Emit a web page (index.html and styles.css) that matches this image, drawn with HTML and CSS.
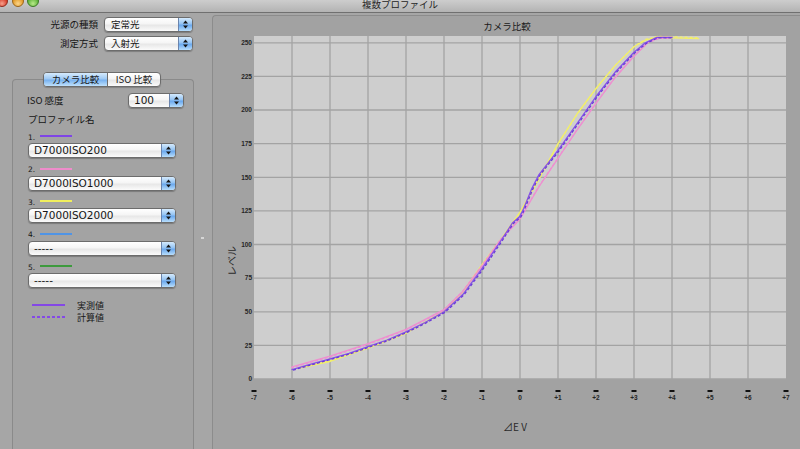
FILE: index.html
```html
<!DOCTYPE html>
<html lang="ja">
<head>
<meta charset="utf-8">
<title>複数プロファイル</title>
<link rel="stylesheet" href="styles.css">
</head>
<body>
<div class="window">
  <header class="titlebar">
    <div class="lights"><span class="light red"></span><span class="light amber"></span><span class="light green"></span></div>
    <div class="title">複数プロファイル</div>
    <div></div>
  </header>
  <div class="main">
    <aside class="sidebar">
      <div class="source-form">
        <span class="form-label">光源の種類</span>
        <div class="popup popup-top"><span class="popup-text">定常光</span><span class="stepper"><svg width="7" height="11" viewBox="0 0 7 11"><polygon points="1,4.5 3.5,1.5 6,4.5"/><polygon points="1,6.5 3.5,9.5 6,6.5"/></svg></span></div>
        <span class="form-label">測定方式</span>
        <div class="popup popup-top"><span class="popup-text">入射光</span><span class="stepper"><svg width="7" height="11" viewBox="0 0 7 11"><polygon points="1,4.5 3.5,1.5 6,4.5"/><polygon points="1,6.5 3.5,9.5 6,6.5"/></svg></span></div>
      </div>
      <section class="group">
        <div class="segmented"><span class="seg seg-on">カメラ比較</span><span class="seg">ISO 比較</span></div>
        <div class="iso-row">
          <span class="label">ISO 感度</span>
          <div class="popup popup-iso"><span class="popup-text latin">100</span><span class="stepper"><svg width="7" height="11" viewBox="0 0 7 11"><polygon points="1,4.5 3.5,1.5 6,4.5"/><polygon points="1,6.5 3.5,9.5 6,6.5"/></svg></span></div>
        </div>
        <div class="section-label">プロファイル名</div>
        <div class="profile first">
          <div class="profile-head"><span class="num">1.</span><span class="swatch sw-purple"></span></div>
          <div class="popup popup-list"><span class="popup-text latin">D7000ISO200</span><span class="stepper"><svg width="7" height="11" viewBox="0 0 7 11"><polygon points="1,4.5 3.5,1.5 6,4.5"/><polygon points="1,6.5 3.5,9.5 6,6.5"/></svg></span></div>
        </div>
        <div class="profile">
          <div class="profile-head"><span class="num">2.</span><span class="swatch sw-pink"></span></div>
          <div class="popup popup-list"><span class="popup-text latin">D7000ISO1000</span><span class="stepper"><svg width="7" height="11" viewBox="0 0 7 11"><polygon points="1,4.5 3.5,1.5 6,4.5"/><polygon points="1,6.5 3.5,9.5 6,6.5"/></svg></span></div>
        </div>
        <div class="profile">
          <div class="profile-head"><span class="num">3.</span><span class="swatch sw-yellow"></span></div>
          <div class="popup popup-list"><span class="popup-text latin">D7000ISO2000</span><span class="stepper"><svg width="7" height="11" viewBox="0 0 7 11"><polygon points="1,4.5 3.5,1.5 6,4.5"/><polygon points="1,6.5 3.5,9.5 6,6.5"/></svg></span></div>
        </div>
        <div class="profile">
          <div class="profile-head"><span class="num">4.</span><span class="swatch sw-blue"></span></div>
          <div class="popup popup-list"><span class="popup-text latin">-----</span><span class="stepper"><svg width="7" height="11" viewBox="0 0 7 11"><polygon points="1,4.5 3.5,1.5 6,4.5"/><polygon points="1,6.5 3.5,9.5 6,6.5"/></svg></span></div>
        </div>
        <div class="profile">
          <div class="profile-head"><span class="num">5.</span><span class="swatch sw-green"></span></div>
          <div class="popup popup-list"><span class="popup-text latin">-----</span><span class="stepper"><svg width="7" height="11" viewBox="0 0 7 11"><polygon points="1,4.5 3.5,1.5 6,4.5"/><polygon points="1,6.5 3.5,9.5 6,6.5"/></svg></span></div>
        </div>
        <div class="legend">
          <div class="legend-row"><span class="legend-line solid"></span><span class="legend-text">実測値</span></div>
          <div class="legend-row"><span class="legend-line dashed"></span><span class="legend-text">計算値</span></div>
        </div>
      </section>
    </aside>
    <div class="splitter"><span class="grip"></span></div>
    <section class="chart-panel">
      <svg class="chart" width="587" height="433" viewBox="213 16 587 433">
        <text class="chart-title" x="507" y="29.5" text-anchor="middle">カメラ比較</text>
        <rect class="plot-bg" x="254" y="36" width="532" height="343"/>
        <g class="grid">
          <line x1="292" y1="36" x2="292" y2="379"/>
          <line x1="330" y1="36" x2="330" y2="379"/>
          <line x1="368" y1="36" x2="368" y2="379"/>
          <line x1="406" y1="36" x2="406" y2="379"/>
          <line x1="444" y1="36" x2="444" y2="379"/>
          <line x1="482" y1="36" x2="482" y2="379"/>
          <line x1="520" y1="36" x2="520" y2="379"/>
          <line x1="558" y1="36" x2="558" y2="379"/>
          <line x1="596" y1="36" x2="596" y2="379"/>
          <line x1="634" y1="36" x2="634" y2="379"/>
          <line x1="672" y1="36" x2="672" y2="379"/>
          <line x1="710" y1="36" x2="710" y2="379"/>
          <line x1="748" y1="36" x2="748" y2="379"/>
          <line x1="254" y1="345.4" x2="786" y2="345.4"/>
          <line x1="254" y1="311.8" x2="786" y2="311.8"/>
          <line x1="254" y1="278.1" x2="786" y2="278.1"/>
          <line x1="254" y1="244.5" x2="786" y2="244.5"/>
          <line x1="254" y1="210.9" x2="786" y2="210.9"/>
          <line x1="254" y1="177.3" x2="786" y2="177.3"/>
          <line x1="254" y1="143.7" x2="786" y2="143.7"/>
          <line x1="254" y1="110" x2="786" y2="110"/>
          <line x1="254" y1="76.4" x2="786" y2="76.4"/>
          <line x1="254" y1="42.8" x2="786" y2="42.8"/>
          <line x1="254" y1="379" x2="786" y2="379"/>
        </g>
        <g class="ylabels" text-anchor="end">
          <text x="252" y="381.3">0</text>
          <text x="252" y="347.7">25</text>
          <text x="252" y="314.1">50</text>
          <text x="252" y="280.4">75</text>
          <text x="252" y="246.8">100</text>
          <text x="252" y="213.2">125</text>
          <text x="252" y="179.6">150</text>
          <text x="252" y="146">175</text>
          <text x="252" y="112.3">200</text>
          <text x="252" y="78.7">225</text>
          <text x="252" y="45.1">250</text>
        </g>
        <g class="xticks">
          <rect x="251.5" y="390" width="5" height="2"/>
          <rect x="289.5" y="390" width="5" height="2"/>
          <rect x="327.5" y="390" width="5" height="2"/>
          <rect x="365.5" y="390" width="5" height="2"/>
          <rect x="403.5" y="390" width="5" height="2"/>
          <rect x="441.5" y="390" width="5" height="2"/>
          <rect x="479.5" y="390" width="5" height="2"/>
          <rect x="517.5" y="390" width="5" height="2"/>
          <rect x="555.5" y="390" width="5" height="2"/>
          <rect x="593.5" y="390" width="5" height="2"/>
          <rect x="631.5" y="390" width="5" height="2"/>
          <rect x="669.5" y="390" width="5" height="2"/>
          <rect x="707.5" y="390" width="5" height="2"/>
          <rect x="745.5" y="390" width="5" height="2"/>
          <rect x="783.5" y="390" width="5" height="2"/>
        </g>
        <g class="xlabels" text-anchor="middle">
          <text x="254" y="399.5">-7</text>
          <text x="292" y="399.5">-6</text>
          <text x="330" y="399.5">-5</text>
          <text x="368" y="399.5">-4</text>
          <text x="406" y="399.5">-3</text>
          <text x="444" y="399.5">-2</text>
          <text x="482" y="399.5">-1</text>
          <text x="520" y="399.5">0</text>
          <text x="558" y="399.5">+1</text>
          <text x="596" y="399.5">+2</text>
          <text x="634" y="399.5">+3</text>
          <text x="672" y="399.5">+4</text>
          <text x="710" y="399.5">+5</text>
          <text x="748" y="399.5">+6</text>
          <text x="786" y="399.5">+7</text>
        </g>
        <text class="axis-title" x="515" y="431" text-anchor="middle">⊿E V</text>
        <text class="axis-title" x="236" y="261" text-anchor="middle" transform="rotate(-90 236 261)">レベル</text>
        <g class="curves">
          <polyline class="c-yellow" points="299.6,368.2 330,361.5 368,348.1 406,333.3 444,311.8 463,291.6 482,264.7 501,239.1 520,212.2 539,178.6 558,143.6 577,114 596,88.5 615,65.6 634,46.8 645.4,40.1 656.8,37.4 698.6,38.7"/>
          <polyline class="c-yellow dash" transform="translate(1 -1)" points="299.6,368.2 330,361.5 368,348.1 406,333.3 444,311.8 463,291.6 482,264.7 501,239.1 520,212.2 539,178.6 558,143.6 577,114 596,88.5 615,65.6 634,46.8 645.4,40.1 656.8,37.4 698.6,38.7"/>
          <polyline class="c-pink" points="292,366.9 330,356.1 368,343.7 406,329.4 444,309.7 463,291.2 482,266 501,239.1 520,219 539,186.7 558,158.4 577,130.2 596,103.3 615,77.7 634,56.2 649.2,41.4 660.6,37.4 672,37.4"/>
          <polyline class="c-pink dash" transform="translate(-1 1)" points="292,366.9 330,356.1 368,343.7 406,329.4 444,309.7 463,291.2 482,266 501,239.1 520,219 539,186.7 558,158.4 577,130.2 596,103.3 615,77.7 634,56.2 649.2,41.4 660.6,37.4 672,37.4"/>
          <polyline class="c-purple" points="292,369.6 311,364.2 330,358.8 349,353.4 368,346.7 387,340 406,331.9 425,322.5 444,311.8 463,294.3 482,268.7 501,240.5 512.4,223 520,216.3 523.8,208.2 531.4,189.4 539,174.6 558,150.4 577,123.5 596,96.5 615,72.3 634,52.2 645.4,42.8 656.8,37.4 672,37.4"/>
          <polyline class="c-purple dash" transform="translate(1 0.5)" points="292,369.6 311,364.2 330,358.8 349,353.4 368,346.7 387,340 406,331.9 425,322.5 444,311.8 463,294.3 482,268.7 501,240.5 512.4,223 520,216.3 523.8,208.2 531.4,189.4 539,174.6 558,150.4 577,123.5 596,96.5 615,72.3 634,52.2 645.4,42.8 656.8,37.4 672,37.4"/>
        </g>
      </svg>
    </section>
  </div>
</div>
</body>
</html>
```

FILE: styles.css
```css
html, body {
  margin: 0;
  padding: 0;
}
body {
  width: 800px;
  height: 449px;
  overflow: hidden;
  background: #a6a6a6;
  font-family: "Noto Sans CJK JP", "DejaVu Sans", sans-serif;
  color: #161616;
}
.window {
  display: flex;
  flex-direction: column;
  height: 449px;
  overflow: hidden;
}
.titlebar {
  flex: none;
  display: grid;
  grid-template-columns: 1fr auto 1fr;
  height: 13px;
  box-sizing: border-box;
  border-bottom: 1px solid #707070;
  background: linear-gradient(#cdcdcd, #b3b3b3);
  overflow: hidden;
}
.lights {
  display: flex;
  gap: 3.5px;
  margin-left: -4px;
  margin-top: -5px;
}
.light {
  width: 12px;
  height: 12px;
  border-radius: 50%;
  box-sizing: border-box;
}
.red {
  background: radial-gradient(circle at 50% 75%, #f7a08c 0%, #d53b26 60%, #9c2414 100%);
  border: 1px solid #8e2a1c;
}
.amber {
  background: radial-gradient(circle at 50% 75%, #fbd58a 0%, #e29a27 60%, #a8661a 100%);
  border: 1px solid #9a6418;
}
.green {
  background: radial-gradient(circle at 50% 75%, #b9ea8a 0%, #5fb33a 60%, #3b7d24 100%);
  border: 1px solid #3c7a25;
}
.title {
  font-size: 9.5px;
  line-height: 12px;
  margin-top: -2px;
  color: #1e1e1e;
}
.main {
  flex: 1;
  display: flex;
  min-height: 0;
}
.sidebar {
  flex: none;
  width: 194px;
}
.source-form {
  display: grid;
  grid-template-columns: 98px 89px;
  column-gap: 6px;
  row-gap: 4px;
  padding-top: 4px;
  align-items: center;
}
.form-label {
  justify-self: end;
  font-size: 9.5px;
  line-height: 15px;
}
.popup {
  display: flex;
  height: 15px;
  box-sizing: border-box;
  border: 1px solid #6c6c6c;
  border-radius: 4px;
  background: linear-gradient(#ffffff 0%, #f5f5f5 45%, #e7e7e7 55%, #fbfbfb 100%);
  box-shadow: 0 1px 1px rgba(0, 0, 0, 0.25);
  overflow: hidden;
}
.popup-top {
  width: 89px;
}
.popup-iso {
  width: 56px;
}
.popup-list {
  width: 148px;
}
.popup-text {
  flex: 1;
  padding-left: 6px;
  font-size: 9.5px;
  line-height: 13px;
  white-space: nowrap;
  overflow: hidden;
}
.popup-text.latin {
  font-family: "DejaVu Sans", "Noto Sans CJK JP", sans-serif;
  font-size: 10.5px;
  padding-left: 5px;
}
.stepper {
  flex: none;
  width: 13px;
  border-left: 1px solid #6a84ad;
  background: linear-gradient(#d4eafd 0%, #93c3f3 45%, #6aa8ee 55%, #b8defc 100%);
  display: flex;
  align-items: center;
  justify-content: center;
}
.stepper svg {
  display: block;
  fill: #141414;
}
.group {
  margin: 28px 0 0 12px;
  width: 182px;
  height: 370px;
  box-sizing: border-box;
  border: 1px solid #8a8a8a;
  border-bottom: 0;
  border-radius: 4px 4px 0 0;
  background: #a3a3a3;
  padding: 0 9px 0 15px;
}
.segmented {
  display: flex;
  width: 118px;
  height: 15px;
  box-sizing: border-box;
  margin: -8px 0 0 15px;
  border: 1px solid #6c6c6c;
  border-radius: 4px;
  overflow: hidden;
  background: linear-gradient(#ffffff 0%, #f5f5f5 45%, #e6e6e6 55%, #fafafa 100%);
  box-shadow: 0 1px 1px rgba(0, 0, 0, 0.2);
}
.seg {
  flex: 1;
  display: flex;
  align-items: center;
  justify-content: center;
  font-size: 9.5px;
  line-height: 13px;
  white-space: nowrap;
}
.seg-on {
  flex: none;
  width: 63px;
  border-right: 1px solid #6c6c6c;
  background: linear-gradient(#d6ebfd 0%, #9fcaf5 45%, #78b2f0 55%, #bfe1fc 100%);
}
.iso-row {
  display: flex;
  align-items: center;
  justify-content: space-between;
  margin: 6px 0 0 -1px;
}
.label {
  font-size: 9.5px;
  line-height: 15px;
}
.section-label {
  height: 14px;
  line-height: 14px;
  margin-top: 4px;
  font-size: 9.5px;
}
.profile {
  margin-top: 3.5px;
}
.profile.first {
  margin-top: 3px;
}
.profile-head {
  display: flex;
  align-items: center;
  gap: 6px;
  height: 14px;
}
.num {
  font-family: "DejaVu Sans", sans-serif;
  font-size: 7.5px;
  line-height: 10px;
  padding-top: 3px;
  width: 6px;
}
.swatch {
  width: 32px;
  height: 2px;
}
.sw-purple { background: #7f45e6; }
.sw-pink { background: #ef8ccb; }
.sw-yellow { background: #f1ef5c; }
.sw-blue { background: #4f94e6; }
.sw-green { background: #3d9a3d; }
.legend {
  margin-top: 11px;
}
.legend-row {
  display: flex;
  align-items: center;
  gap: 12px;
  height: 12px;
}
.legend-line {
  width: 33px;
  height: 2px;
  margin-left: 4px;
}
.legend-line.solid {
  background: #8448e6;
}
.legend-line.dashed {
  background: repeating-linear-gradient(90deg, #8448e6 0 3px, transparent 3px 5px);
}
.legend-text {
  font-size: 9px;
  line-height: 11px;
}
.splitter {
  flex: none;
  width: 18px;
}
.grip {
  display: block;
  width: 3px;
  height: 2px;
  margin: 224px 0 0 7px;
  background: #d6d6d6;
}
.chart-panel {
  flex: 1;
  margin-top: 2px;
  border-top: 1px solid #8c8c8c;
  border-left: 1px solid #8c8c8c;
  border-radius: 4px 0 0 0;
  background: #a2a2a2;
  overflow: hidden;
}
.chart {
  display: block;
}
.chart-title {
  font-family: "Noto Sans CJK JP", sans-serif;
  font-size: 9.5px;
  fill: #1a1a1a;
}
.plot-bg {
  fill: #cecece;
}
.grid line {
  stroke: #a3a3a3;
  stroke-width: 1.3;
}
.ylabels text,
.xlabels text {
  font-family: "Liberation Sans", sans-serif;
  font-size: 6.5px;
  font-weight: bold;
  fill: #262626;
}
.xticks rect {
  fill: #111111;
}
.axis-title {
  font-family: "Noto Sans CJK JP", "DejaVu Sans", sans-serif;
  font-size: 10px;
  fill: #2a2a2a;
}
.curves polyline {
  fill: none;
  stroke-width: 1.3;
  stroke-linejoin: round;
  stroke-linecap: round;
}
.curves .dash {
  stroke-dasharray: 3 2;
  stroke-linecap: butt;
}
.c-yellow { stroke: #f2ef6a; }
.c-pink { stroke: #ee8fd0; }
.c-purple { stroke: #8450ea; }
.c-purple.dash { stroke: #6a3ad8; }
```
